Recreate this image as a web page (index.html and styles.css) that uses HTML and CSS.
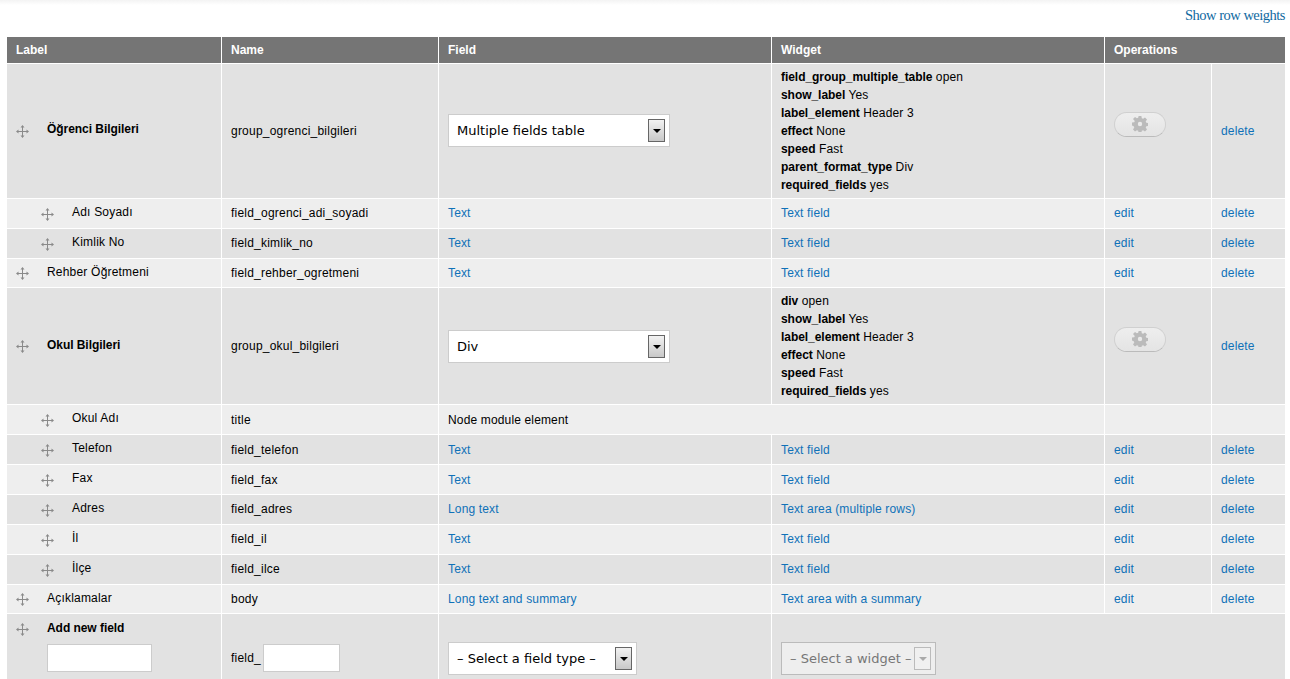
FILE: index.html
```html
<!DOCTYPE html>
<html lang="tr">
<head>
<meta charset="utf-8">
<title>Manage fields</title>
<link rel="stylesheet" href="styles.css">
</head>
<body>
<svg class="defs" width="0" height="0" aria-hidden="true">
  <symbol id="drag" viewBox="0 0 13 13">
    <path d="M6.5 1v11M1 6.5h11" stroke="#8a8a8a" stroke-width="1" fill="none"/>
    <path d="M6.5 0l2 2.5h-4zM6.5 13l2-2.5h-4zM0 6.5l2.5-2v4zM13 6.5l-2.5-2v4z" fill="#8a8a8a"/>
  </symbol>
  <symbol id="gear" viewBox="0 0 16 16">
    <path fill-rule="evenodd" fill="#bbb" d="M6.600 0h2.800l.4 2.200 1.300.6 1.900-1.300 2 2-1.300 1.900.6 1.300 2.200.4v2.800l-2.200.4-.6 1.300 1.300 1.900-2 2-1.900-1.300-1.300.6-.4 2.200H6.600l-.4-2.200-1.300-.6L3 15.500l-2-2 1.300-1.900-.6-1.300L0 9.400V6.600l2.200-.4.6-1.300L1 3l2-2 1.900 1.300 1.300-.6zM8 5.800a2.200 2.200 0 1 0 0 4.400 2.200 2.200 0 0 0 0-4.400z"/>
  </symbol>
</svg>
<div class="topbar"></div>
<div class="weights"><a href="#">Show row weights</a></div>
<div class="wrap">
<table class="fields">
  <colgroup>
    <col class="c1"><col class="c2"><col class="c3"><col class="c4"><col class="c5"><col class="c6">
  </colgroup>
  <thead>
    <tr><th>Label</th><th>Name</th><th>Field</th><th>Widget</th><th colspan="2">Operations</th></tr>
  </thead>
  <tbody>
    <tr class="even h135">
      <td><div class="lab"><svg class="hd"><use href="#drag"/></svg><strong>Öğrenci Bilgileri</strong></div></td>
      <td>group_ogrenci_bilgileri</td>
      <td><span class="sel w222"><select><option>Multiple fields table</option></select><i class="arr"></i></span></td>
      <td class="sum">
        <div><b>field_group_multiple_table</b> open</div>
        <div><b>show_label</b> Yes</div>
        <div><b>label_element</b> Header 3</div>
        <div><b>effect</b> None</div>
        <div><b>speed</b> Fast</div>
        <div><b>parent_format_type</b> Div</div>
        <div><b>required_fields</b> yes</div>
      </td>
      <td><span class="pill"><svg class="gear"><use href="#gear"/></svg></span></td>
      <td><a href="#">delete</a></td>
    </tr>
    <tr class="odd h30">
      <td><div class="lab in"><svg class="hd"><use href="#drag"/></svg><span>Adı Soyadı</span></div></td>
      <td>field_ogrenci_adi_soyadi</td><td><a href="#">Text</a></td><td><a href="#">Text field</a></td><td><a href="#">edit</a></td><td><a href="#">delete</a></td>
    </tr>
    <tr class="even h30">
      <td><div class="lab in"><svg class="hd"><use href="#drag"/></svg><span>Kimlik No</span></div></td>
      <td>field_kimlik_no</td><td><a href="#">Text</a></td><td><a href="#">Text field</a></td><td><a href="#">edit</a></td><td><a href="#">delete</a></td>
    </tr>
    <tr class="odd h29">
      <td><div class="lab"><svg class="hd"><use href="#drag"/></svg><span>Rehber Öğretmeni</span></div></td>
      <td>field_rehber_ogretmeni</td><td><a href="#">Text</a></td><td><a href="#">Text field</a></td><td><a href="#">edit</a></td><td><a href="#">delete</a></td>
    </tr>
    <tr class="even h117">
      <td><div class="lab"><svg class="hd"><use href="#drag"/></svg><strong>Okul Bilgileri</strong></div></td>
      <td>group_okul_bilgileri</td>
      <td><span class="sel w222 low"><select><option>Div</option></select><i class="arr"></i></span></td>
      <td class="sum">
        <div><b>div</b> open</div>
        <div><b>show_label</b> Yes</div>
        <div><b>label_element</b> Header 3</div>
        <div><b>effect</b> None</div>
        <div><b>speed</b> Fast</div>
        <div><b>required_fields</b> yes</div>
      </td>
      <td><span class="pill"><svg class="gear"><use href="#gear"/></svg></span></td>
      <td><a href="#">delete</a></td>
    </tr>
    <tr class="odd h30 nudge">
      <td><div class="lab in"><svg class="hd"><use href="#drag"/></svg><span>Okul Adı</span></div></td>
      <td>title</td><td colspan="2">Node module element</td><td></td><td></td>
    </tr>
    <tr class="even h30 nudge">
      <td><div class="lab in"><svg class="hd"><use href="#drag"/></svg><span>Telefon</span></div></td>
      <td>field_telefon</td><td><a href="#">Text</a></td><td><a href="#">Text field</a></td><td><a href="#">edit</a></td><td><a href="#">delete</a></td>
    </tr>
    <tr class="odd h30 nudge">
      <td><div class="lab in"><svg class="hd"><use href="#drag"/></svg><span>Fax</span></div></td>
      <td>field_fax</td><td><a href="#">Text</a></td><td><a href="#">Text field</a></td><td><a href="#">edit</a></td><td><a href="#">delete</a></td>
    </tr>
    <tr class="even h30">
      <td><div class="lab in"><svg class="hd"><use href="#drag"/></svg><span>Adres</span></div></td>
      <td>field_adres</td><td><a href="#">Long text</a></td><td><a href="#">Text area (multiple rows)</a></td><td><a href="#">edit</a></td><td><a href="#">delete</a></td>
    </tr>
    <tr class="odd h30">
      <td><div class="lab in"><svg class="hd"><use href="#drag"/></svg><span>İl</span></div></td>
      <td>field_il</td><td><a href="#">Text</a></td><td><a href="#">Text field</a></td><td><a href="#">edit</a></td><td><a href="#">delete</a></td>
    </tr>
    <tr class="even h30">
      <td><div class="lab in"><svg class="hd"><use href="#drag"/></svg><span>İlçe</span></div></td>
      <td>field_ilce</td><td><a href="#">Text</a></td><td><a href="#">Text field</a></td><td><a href="#">edit</a></td><td><a href="#">delete</a></td>
    </tr>
    <tr class="odd h29">
      <td><div class="lab"><svg class="hd"><use href="#drag"/></svg><span>Açıklamalar</span></div></td>
      <td>body</td><td><a href="#">Long text and summary</a></td><td><a href="#">Text area with a summary</a></td><td><a href="#">edit</a></td><td><a href="#">delete</a></td>
    </tr>
    <tr class="even add">
      <td>
        <div class="lab top"><svg class="hd"><use href="#drag"/></svg><strong>Add new field</strong></div>
        <input class="tx newlabel" type="text">
      </td>
      <td class="bot"><span class="nm">field_<input class="tx newname" type="text"></span></td>
      <td class="bot"><span class="sel w189"><select><option>– Select a field type –</option></select><i class="arr"></i></span></td>
      <td class="bot" colspan="3"><span class="sel w155 dis"><select disabled><option>– Select a widget –</option></select><i class="arr"></i></span></td>
    </tr>
  </tbody>
</table>
</div>
</body>
</html>
```
FILE: styles.css
```css
* { box-sizing: border-box; }
html, body { margin: 0; padding: 0; background: #fff; }
body { font-family: "Liberation Sans", Arial, sans-serif; font-size: 12px; color: #000; height: 679px; overflow: hidden; }
.defs { position: absolute; }
.topbar { height: 5px; background: linear-gradient(#f3f3f3, #fff); }
.weights { height: 32px; padding: 2px 5px 0 0; text-align: right; font-family: "Liberation Serif", serif; font-size: 14.5px; line-height: 16px; letter-spacing: -.5px; }
.weights a { color: #10699f; text-decoration: none; }
.wrap { padding: 0 5px 0 7px; }
.fields { width: 1278px; table-layout: fixed; border-collapse: collapse; letter-spacing: .15px; }
.c1 { width: 214px; } .c2 { width: 217px; } .c3 { width: 333px; } .c4 { width: 333px; } .c5 { width: 107px; } .c6 { width: 74px; }
th { height: 26px; background: #757575; color: #fff; text-align: left; font-weight: bold; padding: 0 9px 0 9.5px; border-left: 1px solid #fff; border-bottom: 1px solid #fff; letter-spacing: 0; }
th:first-child { border-left: 0; padding-left: 9px; }
th:last-child { border-right: 1px solid #fff; }
td { padding: 0 9px 0 9.5px; border: 1px solid #fff; border-width: 1px 0 1px 1px; vertical-align: middle; line-height: 18px; }
td:first-child { border-left: 0; padding-left: 9px; letter-spacing: .2px; }
td:nth-child(2) { letter-spacing: .22px; }
.even td { background: #e2e2e2; }
.odd td { background: #eee; }
.h135 { height: 135px; } .h117 { height: 117px; } .h30 { height: 30px; } .h29 { height: 29px; }
.add { height: 66px; }
.nudge td:not(:first-child) { padding-top: 2px; }
a { color: #0f71b8; text-decoration: none; }
.lab { display: flex; align-items: center; position: relative; top: -1px; }
.lab .hd { width: 13px; height: 13px; margin-right: 18px; flex: none; position: relative; top: 2px; }
.lab.in { padding-left: 25px; }
.h135 .lab strong { position: relative; top: -1px; }
b, strong { font-weight: bold; letter-spacing: -.05px; }
.sel { display: inline-block; position: relative; vertical-align: middle; height: 33px; background: #fff; border: 1px solid #ccc; letter-spacing: 0; }
.low { top: 1px; }
.w222 { width: 222px; } .w189 { width: 189px; } .w155 { width: 155px; }
.sel select { appearance: none; -webkit-appearance: none; width: 100%; height: 100%; border: 0; background: transparent; padding: 0 0 0 8px; font-family: "DejaVu Sans", Verdana, sans-serif; font-size: 13px; color: #000; outline: 0; }
.arr { position: absolute; right: 4px; top: 4px; width: 17px; height: 23px; border: 1px solid #666; background: linear-gradient(#f2f2f2, #c8c8c8); }
.arr::after { content: ""; position: absolute; left: 4px; top: 9px; border: 4px solid transparent; border-top: 4px solid #000; border-bottom: 0; }
.dis { background: #eee; border-color: #bbb; }
.dis select { color: #777; opacity: 1; }
.dis .arr { border-color: #bbb; background: #f0f0f0; }
.dis .arr::after { border-top-color: #aaa; }
.pill { display: block; width: 52px; height: 25px; border-radius: 13px; border: 1px solid #d0d0d0; border-bottom-color: #bbb; background: linear-gradient(#eeeeee, #e4e4e4); position: relative; top: -6px; text-align: center; }
.gear { width: 16px; height: 16px; margin-top: 3px; }
.tx { height: 28px; background: #fff; border: 1px solid #ccc; padding: 0 4px; display: inline-block; vertical-align: middle; }
.newlabel { width: 105px; margin: 7px 0 0 31px; display: block; }
.newname { width: 77px; margin-left: 2px; }
.nm { display: inline-flex; align-items: center; height: 33px; vertical-align: middle; }
.bot { vertical-align: bottom; padding-bottom: 4px; }
.lab.top { top: 0; }
.add td:first-child { vertical-align: top; padding-top: 5px; }
```
